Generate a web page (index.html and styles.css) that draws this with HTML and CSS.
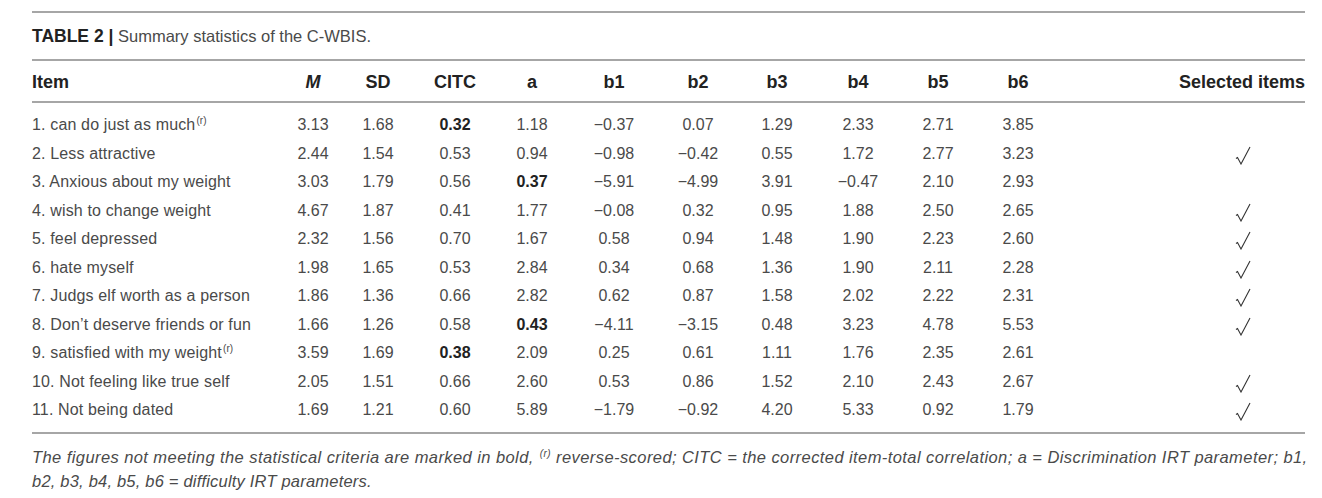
FILE: index.html
```html
<!DOCTYPE html>
<html lang="en">
<head>
<meta charset="utf-8">
<title>TABLE 2 | Summary statistics of the C-WBIS.</title>
<link rel="stylesheet" href="styles.css">
</head>
<body>
<div class="wrap">
  <div class="caption"><span class="label">TABLE 2 |</span> Summary statistics of the C-WBIS.</div>
  <table class="stats">
    <colgroup>
      <col class="c-item"><col class="c-m"><col class="c-sd"><col class="c-citc"><col class="c-a"><col class="c-b1"><col class="c-b2"><col class="c-b3"><col class="c-b4"><col class="c-b5"><col class="c-b6"><col class="c-sel">
    </colgroup>
    <thead>
      <tr>
        <th class="item">Item</th><th><i>M</i></th><th>SD</th><th>CITC</th><th>a</th><th>b1</th><th>b2</th><th>b3</th><th>b4</th><th>b5</th><th>b6</th><th class="sel">Selected items</th>
      </tr>
    </thead>
    <tbody>
      <tr class="first"><td class="item">1. can do just as much<sup class="r">(r)</sup></td><td>3.13</td><td>1.68</td><td><b>0.32</b></td><td>1.18</td><td>−0.37</td><td>0.07</td><td>1.29</td><td>2.33</td><td>2.71</td><td>3.85</td><td class="sel"></td></tr>
      <tr><td class="item">2. Less attractive</td><td>2.44</td><td>1.54</td><td>0.53</td><td>0.94</td><td>−0.98</td><td>−0.42</td><td>0.55</td><td>1.72</td><td>2.77</td><td>3.23</td><td class="sel"><svg class="chk" width="16" height="19" viewBox="0 0 16 19"><polyline points="1,12.5 2.5,11.5 6,18 15,1" fill="none" stroke="#333" stroke-width="1.1"/></svg></td></tr>
      <tr><td class="item">3. Anxious about my weight</td><td>3.03</td><td>1.79</td><td>0.56</td><td><b>0.37</b></td><td>−5.91</td><td>−4.99</td><td>3.91</td><td>−0.47</td><td>2.10</td><td>2.93</td><td class="sel"></td></tr>
      <tr><td class="item">4. wish to change weight</td><td>4.67</td><td>1.87</td><td>0.41</td><td>1.77</td><td>−0.08</td><td>0.32</td><td>0.95</td><td>1.88</td><td>2.50</td><td>2.65</td><td class="sel"><svg class="chk" width="16" height="19" viewBox="0 0 16 19"><polyline points="1,12.5 2.5,11.5 6,18 15,1" fill="none" stroke="#333" stroke-width="1.1"/></svg></td></tr>
      <tr><td class="item">5. feel depressed</td><td>2.32</td><td>1.56</td><td>0.70</td><td>1.67</td><td>0.58</td><td>0.94</td><td>1.48</td><td>1.90</td><td>2.23</td><td>2.60</td><td class="sel"><svg class="chk" width="16" height="19" viewBox="0 0 16 19"><polyline points="1,12.5 2.5,11.5 6,18 15,1" fill="none" stroke="#333" stroke-width="1.1"/></svg></td></tr>
      <tr><td class="item">6. hate myself</td><td>1.98</td><td>1.65</td><td>0.53</td><td>2.84</td><td>0.34</td><td>0.68</td><td>1.36</td><td>1.90</td><td>2.11</td><td>2.28</td><td class="sel"><svg class="chk" width="16" height="19" viewBox="0 0 16 19"><polyline points="1,12.5 2.5,11.5 6,18 15,1" fill="none" stroke="#333" stroke-width="1.1"/></svg></td></tr>
      <tr><td class="item">7. Judgs elf worth as a person</td><td>1.86</td><td>1.36</td><td>0.66</td><td>2.82</td><td>0.62</td><td>0.87</td><td>1.58</td><td>2.02</td><td>2.22</td><td>2.31</td><td class="sel"><svg class="chk" width="16" height="19" viewBox="0 0 16 19"><polyline points="1,12.5 2.5,11.5 6,18 15,1" fill="none" stroke="#333" stroke-width="1.1"/></svg></td></tr>
      <tr><td class="item">8. Don’t deserve friends or fun</td><td>1.66</td><td>1.26</td><td>0.58</td><td><b>0.43</b></td><td>−4.11</td><td>−3.15</td><td>0.48</td><td>3.23</td><td>4.78</td><td>5.53</td><td class="sel"><svg class="chk" width="16" height="19" viewBox="0 0 16 19"><polyline points="1,12.5 2.5,11.5 6,18 15,1" fill="none" stroke="#333" stroke-width="1.1"/></svg></td></tr>
      <tr><td class="item">9. satisfied with my weight<sup class="r">(r)</sup></td><td>3.59</td><td>1.69</td><td><b>0.38</b></td><td>2.09</td><td>0.25</td><td>0.61</td><td>1.11</td><td>1.76</td><td>2.35</td><td>2.61</td><td class="sel"></td></tr>
      <tr><td class="item">10. Not feeling like true self</td><td>2.05</td><td>1.51</td><td>0.66</td><td>2.60</td><td>0.53</td><td>0.86</td><td>1.52</td><td>2.10</td><td>2.43</td><td>2.67</td><td class="sel"><svg class="chk" width="16" height="19" viewBox="0 0 16 19"><polyline points="1,12.5 2.5,11.5 6,18 15,1" fill="none" stroke="#333" stroke-width="1.1"/></svg></td></tr>
      <tr class="last"><td class="item">11. Not being dated</td><td>1.69</td><td>1.21</td><td>0.60</td><td>5.89</td><td>−1.79</td><td>−0.92</td><td>4.20</td><td>5.33</td><td>0.92</td><td>1.79</td><td class="sel"><svg class="chk" width="16" height="19" viewBox="0 0 16 19"><polyline points="1,12.5 2.5,11.5 6,18 15,1" fill="none" stroke="#333" stroke-width="1.1"/></svg></td></tr>
    </tbody>
  </table>
  <p class="note"><span class="line1">The figures not meeting the statistical criteria are marked in bold, <sup class="r">(r)</sup> reverse-scored; CITC = the corrected item-total correlation; a = Discrimination IRT parameter; b1,</span><br><span class="line2">b2, b3, b4, b5, b6 = difficulty IRT parameters.</span></p>
</div>
</body>
</html>
```
FILE: styles.css
```css
html, body {
  margin: 0;
  padding: 0;
  background: #fff;
}
body {
  font-family: "Liberation Sans", Arial, sans-serif;
  color: #4a4a4a;
}
.wrap {
  width: 1273px;
  margin: 11px 0 0 32px;
}
.caption {
  height: 46px;
  border-top: 2px solid #a6a6a6;
  border-bottom: 2px solid #a6a6a6;
  display: flex;
  align-items: center;
  font-size: 16.5px;
  color: #4a4a4a;
  white-space: pre;
}
.caption .label {
  font-weight: bold;
  color: #222;
  font-size: 17.5px;
}
.stats {
  width: 1273px;
  table-layout: fixed;
  border-collapse: separate;
  border-spacing: 0;
  font-size: 16px;
}
.c-item { width: 249px; }
.c-m { width: 64px; }
.c-sd { width: 66px; }
.c-citc { width: 88px; }
.c-a { width: 66px; }
.c-b1 { width: 98px; }
.c-b2 { width: 70px; }
.c-b3 { width: 88px; }
.c-b4 { width: 74px; }
.c-b5 { width: 86px; }
.c-b6 { width: 74px; }
.c-sel { width: 250px; }
.stats th {
  height: 38px;
  padding: 2px 0 0 0;
  font-size: 18px;
  font-weight: bold;
  color: #222;
  text-align: center;
  vertical-align: middle;
  border-bottom: 2px solid #a6a6a6;
  white-space: nowrap;
}
.stats th.item { text-align: left; }
.stats th.sel { text-align: right; }
.stats td {
  padding: 0;
  height: 28.5px;
  line-height: 28.5px;
  text-align: center;
  vertical-align: top;
  white-space: nowrap;
}
.stats td.item {
  text-align: left;
  letter-spacing: 0.15px;
}
.stats td.sel {
  padding-left: 126px;
}
.stats tr.first td { padding-top: 8px; }
.stats tr.last td {
  padding-bottom: 7px;
  border-bottom: 2px solid #a6a6a6;
}
.stats b {
  color: #222;
}
.r {
  font-size: 10px;
  line-height: 0;
  vertical-align: 6px;
  margin-left: 1px;
}
.chk {
  vertical-align: middle;
  position: relative;
  top: 1px;
}
.note {
  margin: 11px 0 0 0;
  font-size: 16.5px;
  line-height: 24px;
  font-style: italic;
  color: #4a4a4a;
  white-space: nowrap;
}
.line1 {
  letter-spacing: 0.42px;
}
.line2 {
  letter-spacing: 0.2px;
}
```
